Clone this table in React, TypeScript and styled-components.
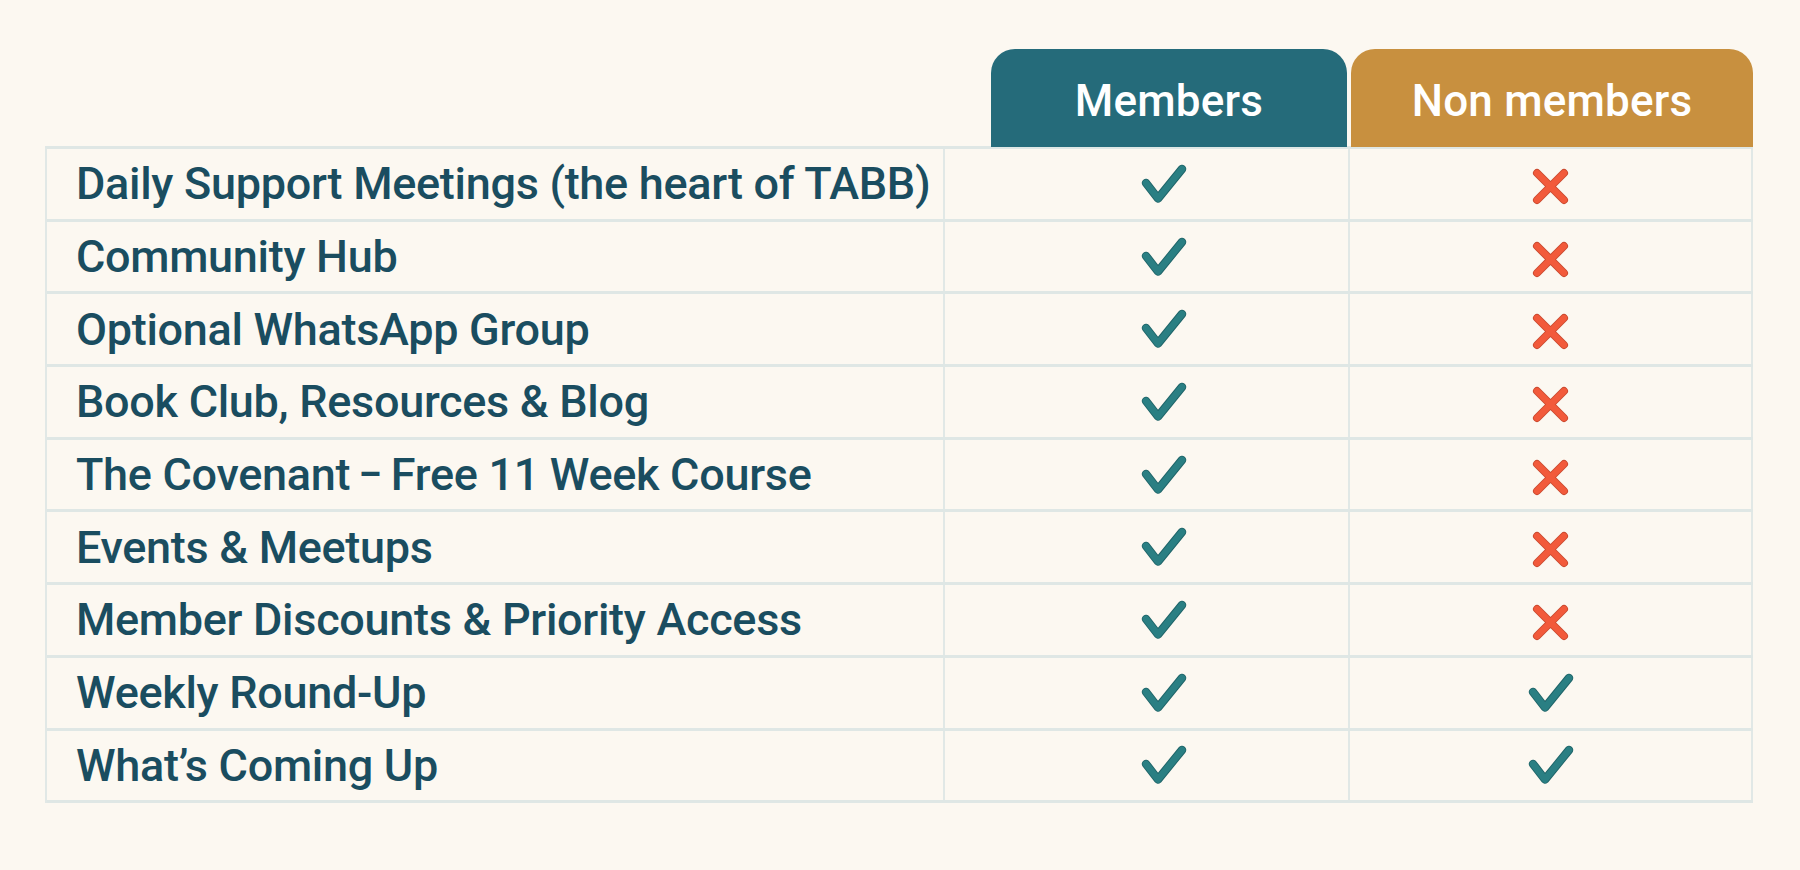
import styled, { createGlobalStyle } from 'styled-components'

const GlobalStyle = createGlobalStyle`
  html, body {
    margin: 0;
    padding: 0;
    background: #fcf8f1;
  }

  body {
    font-family: Roboto, Inter, "Liberation Sans", sans-serif;
    -webkit-font-smoothing: antialiased;
  }
`

const COLUMNS = '900px 405px 403px'

const Page = styled.main`
  width: 1800px;
  height: 870px;
  box-sizing: border-box;
  padding: 49px 0 0 45px;
  background: #fcf8f1;
`

const HeaderRow = styled.div`
  display: grid;
  grid-template-columns: ${COLUMNS};
  height: 98px;
`

const ColumnHead = styled.div<{ $tone: 'members' | 'guests' }>`
  display: flex;
  align-items: center;
  justify-content: center;
  margin-left: ${p => (p.$tone === 'members' ? '46px' : '1px')};
  margin-right: ${p => (p.$tone === 'members' ? '3px' : '0')};
  padding-top: 6px;
  box-sizing: border-box;
  border-radius: 24px 24px 0 0;
  background: ${p => (p.$tone === 'members' ? '#256b7a' : '#c8903f')};
  color: #ffffff;
  font-size: 44px;
  font-weight: 500;
  letter-spacing: 0.2px;
`

const Table = styled.div`
  width: 1708px;
  margin-top: -1px;
  border-top: 3px solid #dfe7e5;
  border-left: 2px solid #e1e8e6;
  box-sizing: border-box;
`

const Row = styled.div`
  display: grid;
  grid-template-columns: 898px 405px 403px;
  height: 72.7px;
  box-sizing: border-box;
  border-bottom: 3px solid #dfe7e5;
`

const Label = styled.div`
  display: flex;
  align-items: center;
  padding-left: 29px;
  border-right: 2px solid #e1e8e6;
  color: #1a4d60;
  font-size: 45px;
  font-weight: 500;
  letter-spacing: -0.3px;
  white-space: nowrap;
`

// the reference's dash is narrower and sits closer to its words
const Dash = styled.span`
  display: inline-block;
  margin: 0 6px;
  transform: scaleX(0.8);
`

const Mark = styled.div<{ $shift?: number }>`
  display: flex;
  align-items: center;
  justify-content: center;
  padding-left: ${p => p.$shift ?? 0}px;
  border-right: 2px solid #e1e8e6;
`

const Check = () => (
  <svg width="46" height="40" viewBox="0 0 46 40" aria-label="yes">
    <path d="M5 19 L17 34.5 L41 5" fill="none" stroke="#1f6468" strokeWidth="8.5"
      strokeLinecap="round" strokeLinejoin="round" />
    <path d="M5 19 L17 34.5 L41 5" fill="none" stroke="#2a7f83" strokeWidth="6.7"
      strokeLinecap="round" strokeLinejoin="round" />
  </svg>
)

const Cross = () => (
  <svg width="37" height="37" viewBox="0 0 37 37" aria-label="no" style={{ marginTop: 5 }}>
    <path d="M5 5 L32 32 M32 5 L5 32" fill="none" stroke="#c9492f" strokeWidth="8"
      strokeLinecap="round" />
    <path d="M5 5 L32 32 M32 5 L5 32" fill="none" stroke="#f25a3b" strokeWidth="6.2"
      strokeLinecap="round" />
  </svg>
)

const features: { name: React.ReactNode; key: string; guests: boolean }[] = [
  { key: 'daily', name: 'Daily Support Meetings (the heart of TABB)', guests: false },
  { key: 'hub', name: 'Community Hub', guests: false },
  { key: 'whatsapp', name: 'Optional WhatsApp Group', guests: false },
  { key: 'books', name: 'Book Club, Resources & Blog', guests: false },
  {
    key: 'covenant',
    name: <>The Covenant<Dash>–</Dash>Free 11 Week Course</>,
    guests: false,
  },
  { key: 'events', name: 'Events & Meetups', guests: false },
  { key: 'discounts', name: 'Member Discounts & Priority Access', guests: false },
  { key: 'roundup', name: 'Weekly Round-Up', guests: true },
  { key: 'coming', name: 'What’s Coming Up', guests: true },
]

const App = () => (
  <>
    <GlobalStyle />
    <Page>
      <HeaderRow>
        <div />
        <ColumnHead $tone="members">Members</ColumnHead>
        <ColumnHead $tone="guests">Non members</ColumnHead>
      </HeaderRow>
      <Table>
        {features.map(f => (
          <Row key={f.key}>
            <Label>{f.name}</Label>
            <Mark $shift={34}><Check /></Mark>
            <Mark>{f.guests ? <Check /> : <Cross />}</Mark>
          </Row>
        ))}
      </Table>
    </Page>
  </>
)

export default App
